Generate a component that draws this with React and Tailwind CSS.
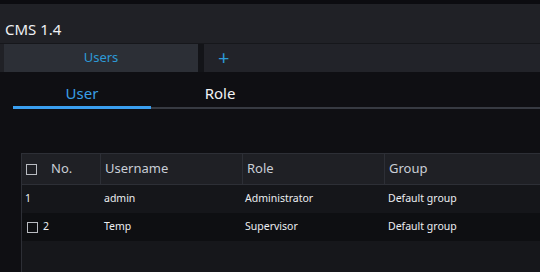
import React from 'react';

const columns = [
  { key: 'no', label: 'No.', width: 'w-[79px]' },
  { key: 'username', label: 'Username', width: 'w-[142px]' },
  { key: 'role', label: 'Role', width: 'w-[142px]' },
  { key: 'group', label: 'Group', width: 'flex-1' },
];

const users = [
  { id: 1, username: 'admin', role: 'Administrator', group: 'Default group', locked: true },
  { id: 2, username: 'Temp', role: 'Supervisor', group: 'Default group', locked: false },
];

function CheckBox() {
  return <span className="inline-block w-[11px] h-[11px] border border-[#b9bcc2] bg-transparent" />;
}

function App() {
  return (
    <div className="w-[540px] h-[272px] overflow-hidden bg-[#0f0f13] text-[#e6e8ec] font-['Noto_Sans',sans-serif] flex flex-col">
      {/* Title bar */}
      <div className="pt-[4px] bg-[#0c0c10]">
        <div className="h-[39px] bg-[#202126] flex items-end pb-[3px] pl-[5px] text-[15px] text-[#eef0f3]">CMS 1.4</div>
        <div className="h-px bg-[#16171b]" />
        <div className="h-[28px] bg-[#202126] flex">
          <div className="ml-[4px] w-[194px] bg-[#2c2f36] flex items-center justify-center text-[13px] text-[#2d9ad6]">Users</div>
          <div className="w-[6px] bg-[#131418]" />
          <div className="flex-1 bg-[#222329] flex items-center pl-[14px] text-[20px] leading-none text-[#2d9ad6]">+</div>
        </div>
      </div>

      {/* Sub tabs */}
      <div className="pl-[13px] pt-[9px]">
        <div className="flex">
          <div className="w-[138px] flex flex-col">
            <div className="h-[25px] flex items-center justify-center text-[15px] text-[#3a9fe6]">User</div>
            <div className="h-[3px] bg-[#3a9ff0]" />
          </div>
          <div className="flex-1 flex flex-col">
            <div className="h-[25px] flex items-center justify-center w-[138px] text-[15px] text-[#f2f3f5]">Role</div>
            <div className="h-[3px] flex flex-col justify-end">
              <div className="h-[2px] bg-[#373a42]" />
            </div>
          </div>
        </div>
      </div>

      {/* Table */}
      <div className="ml-[21px] mt-[44px] flex-1 border-l border-t border-[#2d2f36] bg-[#16171b] text-[10.5px]">
        <div className="h-[31px] flex bg-[#1f2025] border-b border-[#2d2f36] text-[13px] text-[#c9ced6]">
          {columns.map((col, i) => (
            <div
              key={col.key}
              className={`${col.width} flex items-center pl-[4px] ${i < columns.length - 1 ? 'border-r border-[#2d2f36]' : ''}`}
            >
              {i === 0 && (
                <span className="mr-[14px] flex">
                  <CheckBox />
                </span>
              )}
              {col.label}
            </div>
          ))}
        </div>
        {users.map((u, idx) => (
          <div key={u.id} className={`h-[28px] flex items-center ${idx === 0 ? 'bg-[#15161a]' : 'bg-[#0e0f12]'} text-[#eceef1]`}>
            <div className="w-[79px] flex items-center pl-[3px]">
              {!u.locked && (
                <span className="ml-[2px] mr-[5px] flex">
                  <CheckBox />
                </span>
              )}
              {u.id}
            </div>
            <div className="w-[142px] pl-[3px]">{u.username}</div>
            <div className="w-[142px] pl-[2px]">{u.role}</div>
            <div className="flex-1 pl-[3px]">{u.group}</div>
          </div>
        ))}
      </div>
    </div>
  );
}

export default App;
